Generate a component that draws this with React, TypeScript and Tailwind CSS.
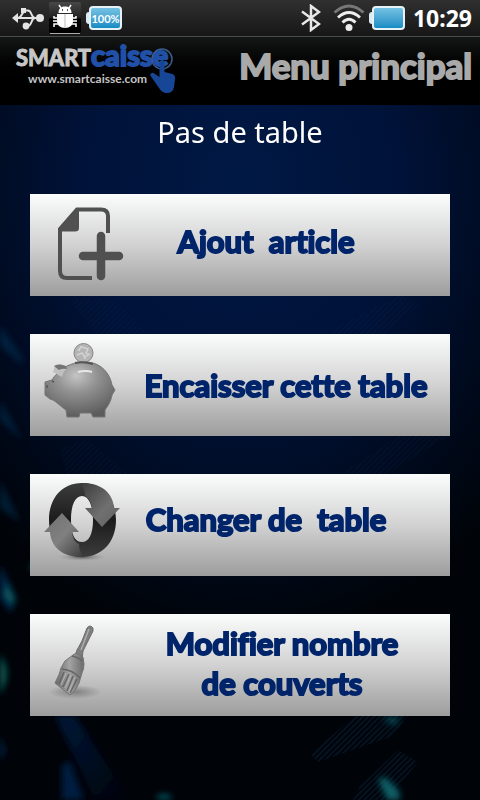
import type { ReactNode } from 'react'

function UsbIcon() {
  return (
    <svg width="32" height="24" viewBox="0 0 32 24" fill="#e4e4e4" aria-hidden="true">
      <path d="M0 12l6-5v10z" />
      <circle cx="28" cy="12" r="4" />
      <rect x="9" y="2" width="5" height="5" />
      <circle cx="14" cy="20" r="3.4" />
      <path
        d="M4 12h22M6 12c4 0 4-7.500 8-7.500h2c4 0 3 7.500 7 7.500M14 20h2c4 0 3-8 7-8"
        fill="none"
        stroke="#e4e4e4"
        strokeWidth="2"
      />
    </svg>
  )
}

function BugIcon() {
  return (
    <svg width="32" height="32" viewBox="0 0 32 32" aria-hidden="true">
      <defs>
        <linearGradient id="bugBox" x1="0" y1="0" x2="0" y2="1">
          <stop offset="0" stopColor="#484848" />
          <stop offset="0.5" stopColor="#222" />
          <stop offset="0.55" stopColor="#000" />
        </linearGradient>
      </defs>
      <rect width="32" height="31" rx="2" fill="url(#bugBox)" />
      <path d="M1 31.500h30" stroke="#aaa" />
      <g fill="#fff">
        <path d="M9.500 11C9.500 6 12.500 4.500 16 4.500s6.500 1.500 6.500 6.500z" />
        <path d="M8 12h16v7c0 4-3 7-8 7s-8-3-8-7z" />
      </g>
      <path
        d="M12 6l-2-3M20 6l2-3M9 16H5v-2M9 19H4M9 22H5v3M23 16h4v-2M23 19h5M23 22h4v3"
        fill="none"
        stroke="#fff"
        strokeWidth="1.500"
      />
      <path d="M16 12v14" stroke="#bbb" />
      <path d="M13 8h1M18 8h1" stroke="#222" strokeWidth="1.500" />
    </svg>
  )
}

function Battery({ children }: { children?: ReactNode }) {
  return (
    <span className="flex items-center">
      <span className="h-3 w-[3px] rounded-l-sm bg-[#dcebf2]" />
      <span className="flex h-6 w-[33px] items-center justify-center rounded-sm border-2 border-[#e6f1f6] bg-linear-to-b from-[#74c2e4] to-[#0f8cc4] text-[11px] leading-none font-bold text-white">
        {children}
      </span>
    </span>
  )
}

function BluetoothIcon() {
  return (
    <svg width="20" height="28" viewBox="0 0 20 28" aria-hidden="true">
      <path
        d="M1 7.500l17 12.500-8 6V2l8 6L1 20.500"
        fill="none"
        stroke="#e8e8e8"
        strokeWidth="2.500"
      />
    </svg>
  )
}

function WifiIcon() {
  return (
    <svg width="32" height="28" viewBox="0 0 32 28" aria-hidden="true">
      <g fill="none" strokeWidth="2.800">
        <path d="M1.500 8.500Q16-4.500 30.500 8.500" stroke="#777" />
        <path d="M5 13.500Q16 3.500 27 13.500" stroke="#eee" />
        <path d="M9.500 18.500Q16 12 22.500 18.500" stroke="#eee" />
      </g>
      <circle cx="16" cy="23.500" r="3.500" fill="#eee" />
    </svg>
  )
}

function StatusBar() {
  return (
    <div className="flex h-[37px] items-center justify-between border-b border-[#4a4a4a] bg-linear-to-b from-[#303030] to-[#171717] pr-2 pl-3">
      <div className="flex items-center gap-[5px]">
        <UsbIcon />
        <BugIcon />
        <Battery>100%</Battery>
      </div>
      <div className="flex items-center">
        <BluetoothIcon />
        <span className="w-3" />
        <WifiIcon />
        <span className="w-1" />
        <Battery />
        <time className="ml-2 font-['Noto_Sans',sans-serif] text-[23px] leading-none font-bold text-white">
          10:29
        </time>
      </div>
    </div>
  )
}

function Logo() {
  return (
    <div className="relative">
      <div className="flex items-baseline leading-7 font-bold">
        <span className="text-[22px] text-[#c6c6c6] [-webkit-text-stroke:1px_#c6c6c6]">SMART</span>
        <span className="text-[29px] text-[#2050a8] [-webkit-text-stroke:2px_#2050a8]">
          caisse
        </span>
      </div>
      <div className="pl-3 text-[12px] leading-[14px] font-bold text-[#c4c4c4]">
        www.smartcaisse.com
      </div>
      {/* Pointing hand over the final letter */}
      <svg
        className="absolute top-1 -right-2"
        width="26"
        height="48"
        viewBox="0 0 26 48"
        aria-hidden="true"
      >
        <circle cx="12" cy="14" r="10" fill="none" stroke="#3c5c92" strokeWidth="1.500" />
        <path
          d="M9.500 18q0-3 2.500-3t2.500 3v9l8 2q3 1 2.500 5l-1 8q-1 6-7 6-5 0-8-5L0 30q2-4 5-1l4.500 3z"
          fill="#174696"
        />
      </svg>
    </div>
  )
}

function AddFileIcon() {
  return (
    <svg width="100" height="102" viewBox="0 0 100 102" aria-hidden="true">
      <path
        d="M78 39V22q0-6.500-7-6.500H47L30 35v42q0 7 7 7h25"
        fill="none"
        stroke="#4f504f"
        strokeWidth="4"
      />
      <path d="M47 15h2v19q0 3.500-4 3.500H29v-3z" fill="#4f504f" />
      <path d="M71 42v40M53 62h36" stroke="#4f504f" strokeWidth="8.500" strokeLinecap="round" />
    </svg>
  )
}

function PiggyIcon() {
  return (
    <svg width="100" height="102" viewBox="0 0 100 102" aria-hidden="true">
      <defs>
        <radialGradient id="pig" cx="0.45" cy="0.25" r="0.75">
          <stop offset="0" stopColor="#c4c4c4" />
          <stop offset="0.4" stopColor="#929292" />
          <stop offset="1" stopColor="#5c5c5c" />
        </radialGradient>
      </defs>
      <circle cx="53.500" cy="19" r="9.500" fill="#b5b5b5" stroke="#858585" />
      <path
        d="M48 16l4-3 6 2-2 4 4 2M47 21l5-2 3 4 4-3M51 12l-2 5M55 25l-1-4"
        fill="none"
        stroke="#d2d2d2"
        strokeWidth="1.500"
      />
      <path
        d="M15 48l7-2q2-4 6-7c7-8 17-11 29-11 15 1 23 12 25 23l3 5-3 5c-1 7-5 12-7 15v7H63l-2-4H50l-1 4H37l-1-7c-6-4-11-10-16-11l-5-4z"
        fill="url(#pig)"
        stroke="#747474"
      />
      <path d="M25 31q6-2 10 1l2 3q-4 2-5 8l-9-5 1-3z" fill="#c0c0c0" />
      <path d="M24 32q5-3 12 0l1 3q-5-1-8 1z" fill="#737373" />
      <path d="M45 29q8-2 18 1" fill="none" stroke="#555" strokeWidth="2" />
      <path d="M48 38q8-2 14 0" fill="none" stroke="#e8e8e8" strokeWidth="2" />
      <path d="M22 47l2 1M17 51v3" stroke="#555" strokeWidth="1.500" />
    </svg>
  )
}

function SwapIcon() {
  return (
    <svg width="100" height="102" viewBox="0 0 100 102" aria-hidden="true">
      <defs>
        <linearGradient id="ring" x1="0" y1="0" x2="0" y2="1">
          <stop offset="0" stopColor="#3c3c3c" />
          <stop offset="0.5" stopColor="#1c1c1c" />
          <stop offset="1" stopColor="#3c3c3c" />
        </linearGradient>
        <linearGradient id="arrowDown" x1="0" y1="0" x2="1" y2="1">
          <stop offset="0" stopColor="#3a3a3a" />
          <stop offset="0.6" stopColor="#707070" />
          <stop offset="1" stopColor="#606060" />
        </linearGradient>
        <linearGradient id="arrowUp" x1="0" y1="0" x2="1" y2="1">
          <stop offset="0" stopColor="#3a3a3a" />
          <stop offset="0.5" stopColor="#808080" />
          <stop offset="1" stopColor="#707070" />
        </linearGradient>
        <radialGradient id="ringShadow">
          <stop offset="0" stopColor="#555" />
          <stop offset="1" stopColor="#999" stopOpacity="0" />
        </radialGradient>
      </defs>
      <ellipse cx="52" cy="83" rx="24" ry="4" fill="url(#ringShadow)" />
      <path
        d="M52 9c20 0 34 15 34 37S72 83 52 83 19 68 19 46 32 9 52 9zm0 13c-7 0-11 9-11 24s4 22 11 22 11-8 11-22-4-24-11-24z"
        fill="url(#ring)"
        fillRule="evenodd"
      />
      <path d="M50 9c20-1 33 9 34 25h6L72 53 55 34h7c-1-7-3-10-7-12 0-5-2-10-5-13z" fill="url(#arrowDown)" />
      <path
        d="M50 9c20-1 33 9 34 25h6L72 53 55 34h7c-1-7-3-10-7-12 0-5-2-10-5-13z"
        fill="url(#arrowUp)"
        transform="rotate(180 52 46)"
      />
    </svg>
  )
}

function BrushIcon() {
  return (
    <svg width="100" height="102" viewBox="0 0 100 102" aria-hidden="true">
      <defs>
        <radialGradient id="brushShadow">
          <stop offset="0" stopColor="#808080" />
          <stop offset="1" stopColor="#808080" stopOpacity="0" />
        </radialGradient>
        <linearGradient id="bristle" x1="0" y1="0" x2="1" y2="0">
          <stop offset="0" stopColor="#6a6a6a" />
          <stop offset="0.5" stopColor="#a3a3a3" />
          <stop offset="1" stopColor="#6a6a6a" />
        </linearGradient>
      </defs>
      <ellipse cx="45" cy="78" rx="27" ry="7" fill="url(#brushShadow)" />
      <path d="M57 14q3-4 6 0v3l-10 20-1 8-7-3 2-6 5-9z" fill="#7d7d7d" stroke="#6c6c6c" />
      <path d="M59 15l-8 21" stroke="#adadad" strokeWidth="1.500" />
      <path
        d="M43 41q4-4 10 2l1 7q0 5-2 9l-3 10q-3 8-9 12L25 69q5-9 6-15l4-7z"
        fill="url(#bristle)"
        stroke="#747474"
      />
      <path d="M42 42q6 1 10 5M32 55q11 1 18 9" fill="none" stroke="#666" strokeWidth="1.500" />
      <path d="M34 58l-5 12M39 60l-6 13M43 62l-6 15M47 65l-7 14" stroke="#666" strokeWidth="1.500" />
      <path d="M36 59l-5 12M41 61l-6 13M45 63l-6 15" stroke="#b2b2b2" />
    </svg>
  )
}

type MenuItem = {
  label: ReactNode
  icon: ReactNode
  labelClass: string
}

const MENU: MenuItem[] = [
  { label: <>Ajout&nbsp; article</>, icon: <AddFileIcon />, labelClass: 'pr-12 pb-2' },
  { label: 'Encaisser cette table', icon: <PiggyIcon />, labelClass: 'pr-2' },
  { label: <>Changer de&nbsp; table</>, icon: <SwapIcon />, labelClass: 'pr-12 pb-3' },
  {
    label: (
      <>
        Modifier nombre
        <br />
        de couverts
      </>
    ),
    icon: <BrushIcon />,
    labelClass: 'pr-4 pb-1',
  },
]

function Backdrop() {
  return (
    <svg
      className="absolute inset-0 h-full w-full"
      viewBox="0 0 480 695"
      preserveAspectRatio="none"
      aria-hidden="true"
    >
      <defs>
        <filter id="soft" x="-50%" y="-50%" width="200%" height="200%">
          <feGaussianBlur stdDeviation="3" />
        </filter>
        <linearGradient id="beam" x1="0" y1="0" x2="1" y2="1">
          <stop offset="0" stopColor="#02173a" />
          <stop offset="1" stopColor="#02173a" stopOpacity="0" />
        </linearGradient>
        <pattern id="lines" width="4" height="4" patternUnits="userSpaceOnUse" patternTransform="rotate(-45)">
          <path d="M0 1h4" stroke="#1b4a80" />
        </pattern>
      </defs>
      <g fill="url(#lines)" opacity="0.15">
        <path d="M70 195h45l60 60h-60z" />
        <path d="M60 345l25-12 60 50H70z" />
        <path d="M330 225l70-35 20 10-70 55z" />
        <path d="M340 370l90-60 20 20-80 50z" />
      </g>
      <g fill="url(#lines)" opacity="0.4">
        <path d="M355 611h52l-14 20-75 26-8-8z" />
        <path d="M360 681l38-36 20 12-30 38h-35z" />
      </g>
      <g filter="url(#soft)">
        <path d="M55 611h20l55 84H95z" fill="url(#beam)" />
        <path d="M62 660l8-4 14 39H62z" fill="#021a40" />
        <path d="M0 220l22 32v8L0 240zM0 295l22 40-22-20zM0 375l20 42-20-14z" fill="#0a3560" opacity="0.5" />
        <path d="M0 460l16 32-5 16-11-15z" fill="#05254c" />
        <path d="M6 478l9 17-2 5-8-9z" fill="#0c5a5e" />
        <path d="M0 550q9 12 6 26l-6 14z" fill="#0d5d58" />
        <path d="M0 630l5 16-5 10z" fill="#052550" />
        <path d="M378 675l7-3 14 14 1 9h-12z" fill="#0c6068" />
        <path d="M382 613h18l-6 7z" fill="#0a5260" />
        <path d="M157 690l12 0 3 4h-14z" fill="#0c6b78" />
        <path d="M30 462l5-6 2 4-5 7z" fill="#0a4a58" />
      </g>
    </svg>
  )
}

export default function App() {
  return (
    <div className="flex min-h-screen flex-col bg-black font-['Lato','Liberation_Sans',sans-serif] [font-variant-ligatures:none]">
      <StatusBar />

      <header className="flex h-[68px] items-start justify-between bg-linear-to-b from-[#151616] to-black to-80% pt-1 pr-2 pl-4">
        <Logo />
        <h1 className="pt-1 text-[35px] leading-10 font-bold text-[#a9a9a9] [-webkit-text-stroke:2px_#a9a9a9]">
          Menu principal
        </h1>
      </header>

      <main className="relative flex-1 bg-[radial-gradient(ellipse_75%_65%_at_50%_12%,#001945_0%,#001238_45%,#000409_100%)]">
        <Backdrop />
        <div className="relative px-[30px] pt-2 pb-10">
          <p className="pt-px text-center font-['Noto_Sans',sans-serif] text-[29px] leading-9 text-white">
            Pas de table
          </p>
          <nav className="mt-11 flex flex-col gap-[38px]">
            {MENU.map((item, i) => (
              <button
                key={i}
                type="button"
                className="flex h-[102px] w-full items-center bg-linear-to-b from-[#fbfdfc] via-[#d2d2d2] to-[#9d9d9d]"
              >
                <span className="shrink-0">{item.icon}</span>
                <span
                  className={`flex-1 text-center text-[31px] leading-10 font-bold whitespace-nowrap text-[#00246a] [-webkit-text-stroke:2px_#00246a] ${item.labelClass}`}
                >
                  {item.label}
                </span>
              </button>
            ))}
          </nav>
        </div>
      </main>
    </div>
  )
}
